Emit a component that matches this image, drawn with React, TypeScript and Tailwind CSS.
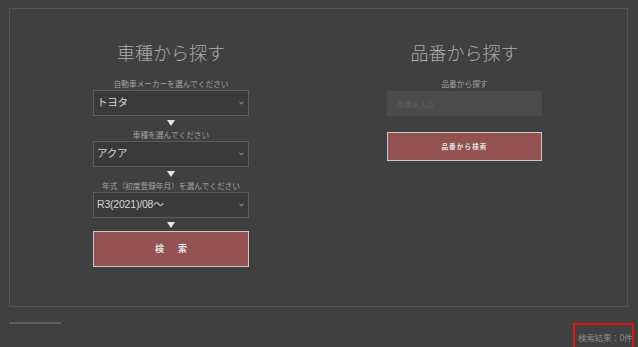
import React from "react";

const serif = { fontFamily: '"Noto Sans CJK JP", serif' };

const Chevron = () => (
  <svg width="5" height="4" viewBox="0 0 5 4" className="shrink-0" aria-hidden="true">
    <polyline points="0.6,1 2.5,2.8 4.4,1" fill="none" stroke="#c4c4c4" strokeWidth="1" />
  </svg>
);

const SelectBox = ({ value }: { value: string }) => (
  <div className="flex h-[26px] items-center justify-between border border-[#5c5c5c] bg-[#3a3a3a] pl-[3px] pr-[4px]">
    <span className="text-[10.5px] text-[#d6d6d6] font-['Liberation_Sans','Noto_Sans_CJK_JP',sans-serif] tracking-[-0.2px]">
      {value}
    </span>
    <Chevron />
  </div>
);

const Label = ({ children }: { children: React.ReactNode }) => (
  <div className="h-[12px] text-center text-[7.7px] leading-[12px] text-[#a2a2a2]" style={serif}>
    {children}
  </div>
);

const Arrow = () => (
  <div className="flex h-[13px] items-center justify-center">
    <svg width="8" height="6" viewBox="0 0 8 6" aria-hidden="true">
      <polygon points="0,0 8,0 4,6" fill="#e6e6e6" />
    </svg>
  </div>
);

export default function App() {
  return (
    <div className="h-[347px] w-[638px] overflow-hidden bg-[#404040] pt-2 pl-[9px]">
      <div className="flex h-[299px] w-[619px] border border-[#535353] pl-[83px] pt-[31px]">
        {/* 車種から探す */}
        <div className="flex w-[156px] flex-col">
          <h2 className="h-[24px] text-center text-[18px] leading-[24px] font-light text-[#ababab]" style={serif}>
            車種から探す
          </h2>
          <div className="mt-[14px]">
            <Label>自動車メーカーを選んでください</Label>
          </div>
          <SelectBox value="トヨタ" />
          <Arrow />
          <Label>車種を選んでください</Label>
          <SelectBox value="アクア" />
          <Arrow />
          <Label>年式（初度登録年月）を選んでください</Label>
          <SelectBox value="R3(2021)/08〜" />
          <Arrow />
          <button className="h-[36px] w-[156px] border border-[#c9c9c9] bg-[#945151] text-[9px] font-bold text-[#e2e2e2] tracking-[14px] pl-[14px] font-['Noto_Sans_CJK_JP',sans-serif]">
            検索
          </button>
        </div>

        {/* 品番から探す */}
        <div className="ml-[138px] flex w-[155px] flex-col">
          <h2 className="h-[24px] text-center text-[18px] leading-[24px] font-light text-[#ababab]" style={serif}>
            品番から探す
          </h2>
          <div className="mt-[14px]">
            <Label>品番から探す</Label>
          </div>
          <div className="mt-px flex h-[25px] items-center bg-[#4a4b4a] pl-[10px]">
            <span className="text-[7.4px] text-[#6c6c6c] font-light" style={serif}>
              品番を入力
            </span>
          </div>
          <button className="mt-[16px] h-[29px] w-[155px] border border-[#c9c9c9] bg-[#945151] text-[6.6px] font-bold text-[#e2e2e2] tracking-[1.1px] font-['Noto_Sans_CJK_JP',sans-serif]">
            品番から検索
          </button>
        </div>
      </div>

      <div className="flex items-start justify-between pr-[4px]">
        <div className="mt-[15px] h-[2px] w-[52px] bg-[#5e5e5e]" />
        <div className="mt-[16px] h-[30px] w-[61px] border-2 border-[#e01414] pl-[3px] pt-[6px]">
          <span className="block text-[8.5px] leading-[12px] text-[#8a8a8a] font-['Noto_Sans_CJK_JP',sans-serif] whitespace-nowrap tracking-[-0.2px]">
            検索結果：0件
          </span>
        </div>
      </div>
    </div>
  );
}
